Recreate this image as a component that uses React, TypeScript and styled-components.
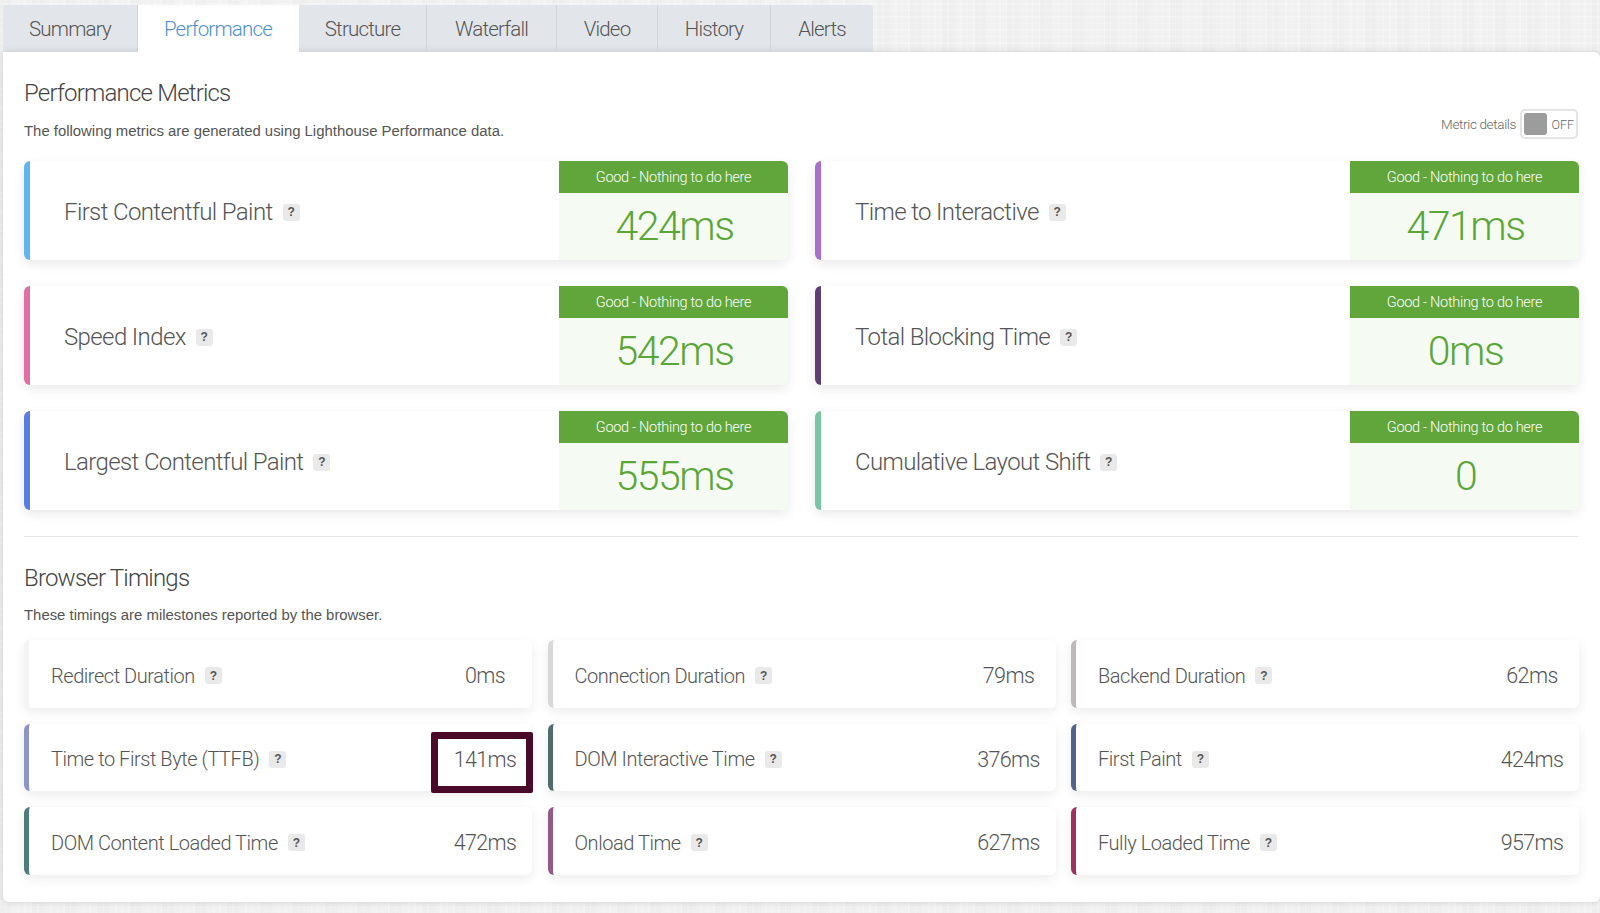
import React from "react";
import styled, { createGlobalStyle } from "styled-components";

const UI_FONT = `Roboto, "Noto Sans", sans-serif`;

const GlobalStyle = createGlobalStyle`
  html, body {
    margin: 0;
    height: 913px;
    overflow: hidden;
    font-family: ${UI_FONT};
    color: #555;
    background-color: #f7f7f7;
    background-image:
      repeating-linear-gradient(90deg, rgba(0,0,0,.012) 0 5px, transparent 5px 6.5px),
      repeating-linear-gradient(0deg, rgba(0,0,0,.012) 0 5px, transparent 5px 6.5px),
      repeating-linear-gradient(90deg, rgba(0,0,0,.01) 0 13px, transparent 13px 32.5px);
  }
`;

const Page = styled.div`
  padding: 5px 0 0 3px;
`;

const TabBar = styled.div`
  display: flex;
  width: 870px;
  height: 47px;
  background: #e2e6ea;
  border-radius: 4px 4px 0 0;
`;

const Tab = styled.div<{ $active?: boolean; $width: number }>`
  display: flex;
  align-items: center;
  justify-content: center;
  box-sizing: border-box;
  width: ${(p) => p.$width}px;
  font-size: 20.5px;
  font-weight: 300;
  letter-spacing: -0.8px;
  color: ${(p) => (p.$active ? "#4f8fd6" : "#555")};
  background: ${(p) => (p.$active ? "#fff" : "transparent")};
  border-right: 1px solid ${(p) => (p.$active ? "transparent" : "#d2d6da")};
  &:last-child {
    border-right: none;
  }
`;

const Panel = styled.div`
  box-sizing: border-box;
  height: 850px;
  padding: 27px 22px 27px 21px;
  background: #fff;
  border-radius: 0 6px 6px 6px;
  box-shadow: 0 0 7px rgba(0, 0, 0, 0.14);
`;

const SectionHead = styled.div`
  display: flex;
  justify-content: space-between;
  align-items: flex-end;
`;

const Title = styled.h2`
  margin: 0;
  font-size: 24px;
  line-height: 28px;
  font-weight: 300;
  letter-spacing: -0.8px;
  color: #444;
`;

const Note = styled.p<{ $tight?: boolean }>`
  margin: ${(p) => (p.$tight ? "13px" : "14px")} 0 0;
  font-family: "Liberation Sans", Arial, sans-serif;
  font-size: 14.9px;
  line-height: 20px;
  color: #555;
`;

const ToggleRow = styled.div`
  display: flex;
  align-items: center;
  gap: 4px;
  margin-bottom: 2px;
  font-size: 13.5px;
  font-weight: 300;
  letter-spacing: -0.35px;
  color: #666;
`;

const Toggle = styled.div`
  display: flex;
  align-items: center;
  box-sizing: border-box;
  width: 58px;
  height: 30px;
  padding: 0 2px;
  gap: 4px;
  border: 2px solid #e4e4e4;
  border-radius: 5px;
  font-size: 12.5px;
  letter-spacing: 0;
`;

const Knob = styled.span`
  width: 25px;
  height: 22px;
  background: #9c9c9c;
  border-radius: 3px;
`;

const MetricGrid = styled.div`
  display: grid;
  grid-template-columns: 764px 764px;
  grid-auto-rows: 98.5px;
  gap: 26.5px 27px;
  margin-top: 20px;
`;

const MetricCard = styled.div<{ $accent: string }>`
  display: flex;
  border-left: 6px solid ${(p) => p.$accent};
  border-radius: 6px;
  background: #fff;
  box-shadow: 0 4px 12px rgba(0, 0, 0, 0.09);
`;

const MetricLabel = styled.div`
  flex: 1;
  display: flex;
  align-items: center;
  gap: 10px;
  padding: 4px 0 0 34px;
  font-size: 24px;
  font-weight: 300;
  letter-spacing: -0.62px;
  color: #555;
`;

const Grade = styled.div`
  display: flex;
  flex-direction: column;
  width: 229px;
  border-radius: 0 6px 6px 0;
  overflow: hidden;
  background: #f5fbf3;
`;

const GradeHead = styled.div`
  height: 32px;
  padding-top: 1px;
  box-sizing: border-box;
  line-height: 32px;
  text-align: center;
  font-size: 14.5px;
  font-weight: 300;
  letter-spacing: -0.3px;
  color: #fff;
  background: #60a63a;
`;

const GradeValue = styled.div`
  flex: 1;
  display: flex;
  align-items: center;
  justify-content: center;
  padding-left: 2px;
  font-size: 41px;
  font-weight: 300;
  letter-spacing: -1.5px;
  color: #5aa637;
`;

const Help = styled.span`
  display: inline-flex;
  align-items: center;
  justify-content: center;
  width: 17px;
  height: 17px;
  border-radius: 3px;
  background: #e9e9e9;
  font-family: "Liberation Sans", Arial, sans-serif;
  font-size: 12px;
  font-weight: 700;
  letter-spacing: 0;
  color: #555;
`;

const Divider = styled.hr`
  height: 1px;
  margin: 26.5px 0 26.5px;
  border: none;
  background: #e6e6e6;
`;

const TimingGrid = styled.div`
  display: grid;
  grid-template-columns: repeat(3, 508px);
  grid-auto-rows: 67.5px;
  gap: 16px 15.5px;
  margin-top: 15.5px;
`;

const TimingCard = styled.div<{ $accent: string }>`
  position: relative;
  display: flex;
  align-items: center;
  padding-top: 4px;
  box-sizing: border-box;
  border-left: 5px solid ${(p) => p.$accent};
  border-radius: 6px;
  background: #fff;
  box-shadow: 0 4px 12px rgba(0, 0, 0, 0.08);
`;

const TimingLabel = styled.div`
  flex: 1;
  display: flex;
  align-items: center;
  gap: 10px;
  padding-left: 22px;
  font-size: 20px;
  font-weight: 300;
  letter-spacing: -0.45px;
  color: #555;
`;

const TimingValue = styled.div`
  width: 94px;
  text-align: center;
  font-size: 21.5px;
  font-weight: 300;
  letter-spacing: -0.6px;
  color: #555;
`;

const Highlight = styled.span`
  position: absolute;
  top: 8px;
  right: -1px;
  box-sizing: border-box;
  width: 102px;
  height: 61px;
  border: 7px solid #4a0a2a;
  border-radius: 2px;
`;

const tabs = [
  { name: "Summary", width: 135 },
  { name: "Performance", width: 161, active: true },
  { name: "Structure", width: 128 },
  { name: "Waterfall", width: 130 },
  { name: "Video", width: 101 },
  { name: "History", width: 113 },
  { name: "Alerts", width: 102 },
];

const metrics = [
  { name: "First Contentful Paint", value: "424ms", accent: "#63b5f0" },
  { name: "Time to Interactive", value: "471ms", accent: "#a870c8" },
  { name: "Speed Index", value: "542ms", accent: "#e070a0" },
  { name: "Total Blocking Time", value: "0ms", accent: "#5e3f73" },
  { name: "Largest Contentful Paint", value: "555ms", accent: "#5b7de0" },
  { name: "Cumulative Layout Shift", value: "0", accent: "#78c4a4" },
];

const timings = [
  { name: "Redirect Duration", value: "0ms", accent: "#f4f4f4" },
  { name: "Connection Duration", value: "79ms", accent: "#d8d8d8" },
  { name: "Backend Duration", value: "62ms", accent: "#bdb9b9" },
  { name: "Time to First Byte (TTFB)", value: "141ms", accent: "#8b96c4", flagged: true },
  { name: "DOM Interactive Time", value: "376ms", accent: "#4f6b6b" },
  { name: "First Paint", value: "424ms", accent: "#54628f" },
  { name: "DOM Content Loaded Time", value: "472ms", accent: "#4f7d78" },
  { name: "Onload Time", value: "627ms", accent: "#935a85" },
  { name: "Fully Loaded Time", value: "957ms", accent: "#a0305f" },
];

export default function App() {
  return (
    <Page>
      <GlobalStyle />
      <TabBar>
        {tabs.map((t) => (
          <Tab key={t.name} $active={t.active} $width={t.width}>
            {t.name}
          </Tab>
        ))}
      </TabBar>
      <Panel>
        <SectionHead>
          <div>
            <Title>Performance Metrics</Title>
            <Note>The following metrics are generated using Lighthouse Performance data.</Note>
          </div>
          <ToggleRow>
            Metric details
            <Toggle>
              <Knob />
              OFF
            </Toggle>
          </ToggleRow>
        </SectionHead>
        <MetricGrid>
          {metrics.map((m) => (
            <MetricCard key={m.name} $accent={m.accent}>
              <MetricLabel>
                {m.name}
                <Help>?</Help>
              </MetricLabel>
              <Grade>
                <GradeHead>Good - Nothing to do here</GradeHead>
                <GradeValue>{m.value}</GradeValue>
              </Grade>
            </MetricCard>
          ))}
        </MetricGrid>
        <Divider />
        <Title>Browser Timings</Title>
        <Note $tight>These timings are milestones reported by the browser.</Note>
        <TimingGrid>
          {timings.map((t) => (
            <TimingCard key={t.name} $accent={t.accent}>
              <TimingLabel>
                {t.name}
                <Help>?</Help>
              </TimingLabel>
              <TimingValue>{t.value}</TimingValue>
              {t.flagged && <Highlight />}
            </TimingCard>
          ))}
        </TimingGrid>
      </Panel>
    </Page>
  );
}
